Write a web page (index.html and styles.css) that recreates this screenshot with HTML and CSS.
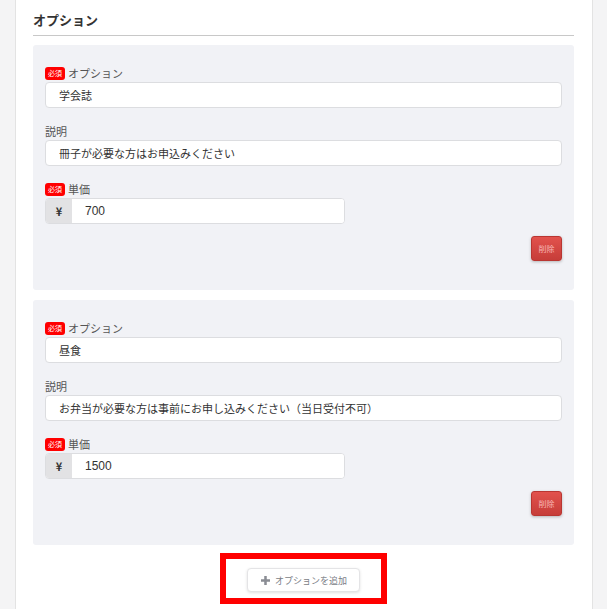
FILE: index.html
```html
<!DOCTYPE html>
<html lang="ja">
<head>
  <meta charset="UTF-8">
  <title>オプション</title>
  <link rel="stylesheet" href="styles.css">
</head>
<body>
  <div class="page">
    <h2 class="section-title">オプション</h2>

    <div class="option-panel">
      <div class="field">
        <label class="field-label"><span class="required">必須</span>オプション</label>
        <input class="text-input" type="text" value="学会誌">
      </div>
      <div class="field">
        <label class="field-label">説明</label>
        <input class="text-input" type="text" value="冊子が必要な方はお申込みください">
      </div>
      <div class="field">
        <label class="field-label"><span class="required">必須</span>単価</label>
        <div class="input-group">
          <span class="addon">¥</span>
          <input class="group-input" type="text" value="700">
        </div>
      </div>
      <div class="actions">
        <button class="btn-delete" type="button">削除</button>
      </div>
    </div>

    <div class="option-panel">
      <div class="field">
        <label class="field-label"><span class="required">必須</span>オプション</label>
        <input class="text-input" type="text" value="昼食">
      </div>
      <div class="field">
        <label class="field-label">説明</label>
        <input class="text-input" type="text" value="お弁当が必要な方は事前にお申し込みください（当日受付不可）">
      </div>
      <div class="field">
        <label class="field-label"><span class="required">必須</span>単価</label>
        <div class="input-group">
          <span class="addon">¥</span>
          <input class="group-input" type="text" value="1500">
        </div>
      </div>
      <div class="actions">
        <button class="btn-delete" type="button">削除</button>
      </div>
    </div>

    <div class="add-row">
      <div class="highlight">
        <button class="btn-add" type="button">
          <svg width="9" height="9" viewBox="0 0 10 10"><path d="M3.6 0h2.8v3.6H10v2.8H6.4V10H3.6V6.4H0V3.6h3.6z" fill="#8a8d94"/></svg>
          オプションを追加
        </button>
      </div>
    </div>
  </div>
</body>
</html>
```

FILE: styles.css
```css
body {
  margin: 0;
  background: #f4f4f5;
  font-family: "Noto Sans CJK JP", "Noto Sans", sans-serif;
  color: #333;
}
.page {
  box-sizing: border-box;
  width: 578px;
  min-height: 609px;
  margin-left: 15px;
  padding: 0 18px 0 17px;
  background: #fff;
  border-left: 1px solid #e3e3e3;
  border-right: 1px solid #e3e3e3;
}
.section-title {
  margin: 0 0 9px;
  padding-top: 10px;
  font-size: 13px;
  line-height: 20px;
  font-weight: bold;
  color: #333;
  border-bottom: 1px solid #c8c8c8;
  padding-bottom: 5px;
}
.option-panel {
  background: #f1f2f6;
  border-radius: 3px;
  padding: 19px 12px 29px;
}
.option-panel + .option-panel {
  margin-top: 10px;
}
.field {
  margin-bottom: 14px;
}
.field:nth-child(3) {
  margin-bottom: 12px;
}
.field-label {
  display: flex;
  align-items: center;
  height: 18px;
  font-size: 11px;
  color: #555;
}
.required {
  display: inline-block;
  width: 20px;
  height: 13px;
  line-height: 13px;
  margin-right: 3px;
  background: #ff0000;
  color: #fff;
  font-size: 7px;
  text-align: center;
  border-radius: 3px;
}
.text-input {
  box-sizing: border-box;
  display: block;
  width: 100%;
  height: 26px;
  padding: 0 13px;
  border: 1px solid #dcdde0;
  border-radius: 4px;
  background: #fff;
  font-family: inherit;
  font-size: 11px;
  color: #333;
}
.input-group {
  display: flex;
  width: 300px;
  height: 26px;
  border: 1px solid #dcdde0;
  border-radius: 4px;
  box-sizing: border-box;
  overflow: hidden;
  background: #fff;
}
.addon {
  width: 26px;
  display: flex;
  align-items: center;
  justify-content: center;
  background: #e2e2e4;
  font-size: 11px;
  font-weight: bold;
  color: #333;
}
.group-input {
  flex: 1;
  border: none;
  padding: 0 13px;
  font-family: "Liberation Sans", sans-serif;
  font-size: 12px;
  color: #333;
  background: #fff;
}
.actions {
  display: flex;
  justify-content: flex-end;
}
.btn-delete {
  width: 31px;
  height: 25px;
  padding: 0;
  border: 1px solid #b93632;
  border-radius: 3px;
  background: linear-gradient(#e2524d, #c63d39);
  color: #f7b5b3;
  font-family: inherit;
  font-size: 8px;
  box-shadow: 0 1px 3px rgba(0,0,0,0.25);
}
.add-row {
  display: flex;
  justify-content: center;
  padding-top: 8px;
}
.highlight {
  border: 6px solid #ff0000;
  padding: 9px 21px 6px;
}
.btn-add {
  display: flex;
  align-items: center;
  gap: 5px;
  width: 113px;
  height: 24px;
  padding: 0 0 0 13px;
  border: 1px solid #e4e4e6;
  border-radius: 4px;
  background: #fff;
  color: #7a7d85;
  font-family: inherit;
  font-size: 9px;
  box-shadow: 0 1px 3px rgba(0,0,0,0.12);
}
```
